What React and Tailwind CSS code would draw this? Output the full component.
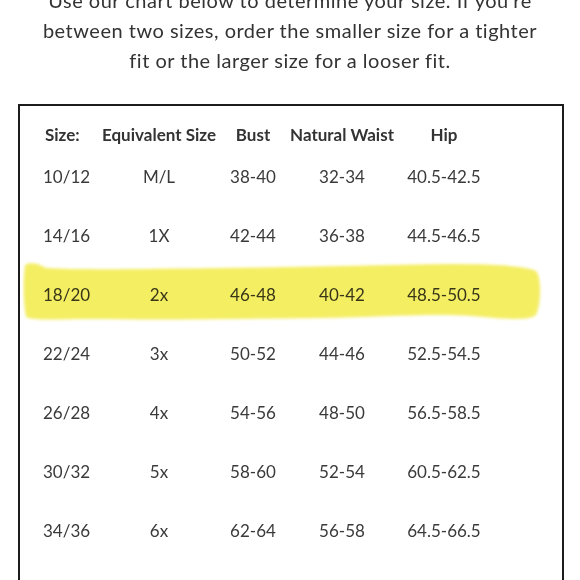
import React from 'react';

const rows = [
    ['10/12', 'M/L', '38-40', '32-34', '40.5-42.5'],
    ['14/16', '1X', '42-44', '36-38', '44.5-46.5'],
    ['18/20', '2x', '46-48', '40-42', '48.5-50.5'],
    ['22/24', '3x', '50-52', '44-46', '52.5-54.5'],
    ['26/28', '4x', '54-56', '48-50', '56.5-58.5'],
    ['30/32', '5x', '58-60', '52-54', '60.5-62.5'],
    ['34/36', '6x', '62-64', '56-58', '64.5-66.5'],
    ['38/40', '7x', '66-68', '60-62', '68.5-70.5'],
];

const cols = 'grid grid-cols-[80px_118px_70px_108px_96px]';

// Yellow marker stroke drawn over the 18/20 row
const Highlight = () => (
    <svg
        className="absolute left-[2px] top-[-4px] mix-blend-multiply pointer-events-none"
        width="522"
        height="64"
        viewBox="0 0 522 64"
    >
        <defs>
            <filter id="soft" x="-5%" y="-20%" width="110%" height="140%">
                <feGaussianBlur stdDeviation="1.6" />
            </filter>
        </defs>
        <path
            d="M3 4 C 8 1, 16 2, 24 7 C 60 9, 120 8, 200 7 C 280 6, 360 4, 430 3 C 470 3, 505 5, 514 10 C 520 16, 519 44, 514 54 C 508 60, 480 58, 450 55 C 410 52, 360 56, 300 57 C 220 58, 140 59, 70 58 C 40 58, 12 60, 4 56 C 1 40, 1 20, 3 4 Z"
            fill="#f4ee64"
            filter="url(#soft)"
        />
    </svg>
);

export default function App() {
    return (
        <div className="w-[580px] h-[580px] overflow-hidden bg-white text-[#333] font-['Lato','Noto_Sans',sans-serif]">
            {/* Intro copy */}
            <div className="mt-[-15px] text-center text-[20px] leading-[30px] tracking-[0.5px] px-[30px]">
                <p>Use our chart below to determine your size. If you're</p>
                <p>between two sizes, order the smaller size for a tighter</p>
                <p>fit or the larger size for a looser fit.</p>
            </div>

            {/* Chart */}
            <div className="mt-[29px] ml-[18px] w-[546px] h-[600px] border-2 border-[#1c1c1c] pt-[16px]">
                <div className={`${cols} h-[25px] items-center text-[17px] font-bold text-[#333]`}>
                    <div className="pl-[25px]">Size:</div>
                    <div className="text-center whitespace-nowrap">Equivalent Size</div>
                    <div className="text-center">Bust</div>
                    <div className="text-center whitespace-nowrap">Natural Waist</div>
                    <div className="text-center">Hip</div>
                </div>
                {rows.map((r, i) => (
                    <div key={r[0]} className={`relative ${cols} h-[59px] items-center text-[17px] text-[#3a3a3a]`}>
                        {i === 2 && <Highlight />}
                        <div className="pl-[23px]">{r[0]}</div>
                        <div className="text-center">{r[1]}</div>
                        <div className="text-center">{r[2]}</div>
                        <div className="text-center">{r[3]}</div>
                        <div className="text-center">{r[4]}</div>
                    </div>
                ))}
            </div>
        </div>
    );
}
